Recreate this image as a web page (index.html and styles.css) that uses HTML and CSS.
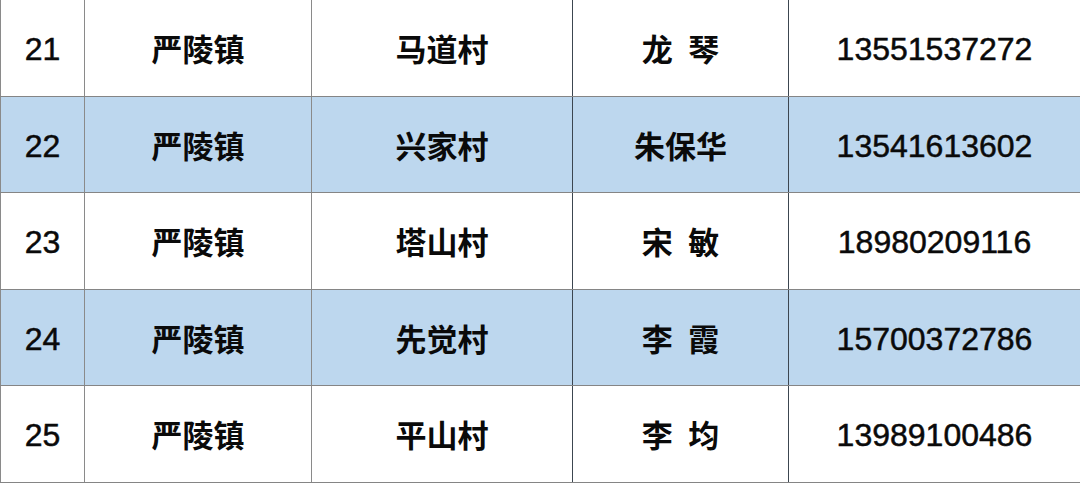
FILE: index.html
```html
<!DOCTYPE html>
<html lang="zh-CN">
<head>
<meta charset="utf-8">
<title>表格</title>
<link rel="stylesheet" href="styles.css">
</head>
<body>
<div class="sheet">
  <div class="row tall">
    <div class="cell num">21</div>
    <div class="cell cjk">严陵镇</div>
    <div class="cell cjk">马道村</div>
    <div class="cell cjk dark">龙&ensp;琴</div>
    <div class="cell num dark">13551537272</div>
  </div>
  <div class="row short blue">
    <div class="cell num">22</div>
    <div class="cell cjk">严陵镇</div>
    <div class="cell cjk">兴家村</div>
    <div class="cell cjk dark">朱保华</div>
    <div class="cell num dark">13541613602</div>
  </div>
  <div class="row tall">
    <div class="cell num">23</div>
    <div class="cell cjk">严陵镇</div>
    <div class="cell cjk">塔山村</div>
    <div class="cell cjk dark">宋&ensp;敏</div>
    <div class="cell num dark">18980209116</div>
  </div>
  <div class="row short blue">
    <div class="cell num">24</div>
    <div class="cell cjk">严陵镇</div>
    <div class="cell cjk">先觉村</div>
    <div class="cell cjk dark">李&ensp;霞</div>
    <div class="cell num dark">15700372786</div>
  </div>
  <div class="row tall">
    <div class="cell num">25</div>
    <div class="cell cjk">严陵镇</div>
    <div class="cell cjk">平山村</div>
    <div class="cell cjk dark">李&ensp;均</div>
    <div class="cell num dark">13989100486</div>
  </div>
</div>
</body>
</html>
```

FILE: styles.css
```css
html, body {
  margin: 0;
  padding: 0;
  background: #ffffff;
}
body {
  width: 1080px;
  height: 483px;
  overflow: hidden;
}
.sheet {
  display: flex;
  flex-direction: column;
  width: 1080px;
}
.row {
  display: grid;
  grid-template-columns: 84px 227px 261px 216px 1fr;
  border-bottom: 1px solid #858585;
  box-sizing: border-box;
  background: #ffffff;
}
.row.tall { height: 97px; }
.row.short { height: 96px; }
.row.blue { background: #bdd7ee; }
.cell {
  display: flex;
  align-items: center;
  justify-content: center;
  border-left: 1px solid #8a8a8a;
  color: #0a0a0a;
  white-space: pre;
}
.cell.dark { border-left-color: #3c4650; }
.num {
  font-family: "Liberation Sans", Arial, sans-serif;
  font-size: 32px;
  font-weight: 400;
  padding-top: 3px;
  -webkit-text-stroke: 0.5px #0a0a0a;
}
.cjk {
  font-family: "Noto Sans CJK SC", "Noto Sans", sans-serif;
  font-size: 31px;
  font-weight: 700;
  padding-bottom: 1px;
}
```
